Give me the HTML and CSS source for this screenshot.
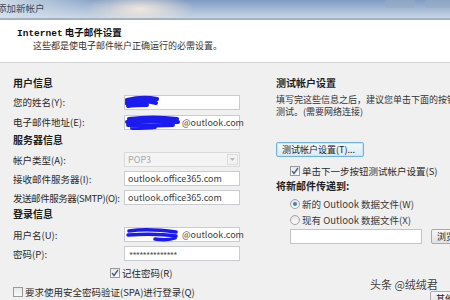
FILE: index.html
```html
<!DOCTYPE html>
<html lang="zh-CN">
<head>
<meta charset="UTF-8">
<title>添加新帐户</title>
<link rel="stylesheet" href="styles.css">
</head>
<body>
<div class="window">
  <div class="titlebar">
    <span class="titleText">添加新帐户</span>
    <div class="tbBtns">
      <div class="tbBtn"></div>
      <div class="tbBtn wide"></div>
    </div>
  </div>

  <div class="header">
    <div class="hTitle"><span class="mono">Internet</span> 电子邮件设置</div>
    <div class="hSub">这些都是使电子邮件帐户正确运行的必需设置。</div>
  </div>

  <div class="content">
    <div class="left">
      <div class="group">用户信息</div>
      <div class="row">
        <label>您的姓名(Y):</label>
        <div class="field">
          <svg class="scribble" width="40" height="16" viewBox="0 0 40 16"><path d="M2 5 C10 3 22 2 32 4 M1 8 C12 6 24 6 31 8 M3 11 C10 10 18 10 22 10" stroke="#1b1bf0" stroke-width="4" fill="none" stroke-linecap="round"/></svg>
        </div>
      </div>
      <div class="row">
        <label>电子邮件地址(E):</label>
        <div class="field">
          <svg class="scribble" width="56" height="16" viewBox="0 0 56 16"><path d="M4 4 C20 2 36 2 52 4 M2 7 C18 6 34 6 53 7 M3 10 C16 10 30 11 48 10 M7 13 C14 13 22 13 30 12" stroke="#1b1bf0" stroke-width="4" fill="none" stroke-linecap="round"/></svg>
          <span class="val mail">@outlook.com</span>
        </div>
      </div>
      <div class="group g2">服务器信息</div>
      <div class="row">
        <label>帐户类型(A):</label>
        <div class="field select">
          <span class="val">POP3</span>
          <span class="arrow"><svg width="5" height="3" viewBox="0 0 5 3"><path d="M0 0 L5 0 L2.5 3 Z" fill="#b8b8b8"/></svg></span>
        </div>
      </div>
      <div class="row">
        <label>接收邮件服务器(I):</label>
        <div class="field"><span class="val">outlook.office365.com</span></div>
      </div>
      <div class="row">
        <label class="tight">发送邮件服务器(SMTP)(O):</label>
        <div class="field"><span class="val">outlook.office365.com</span></div>
      </div>
      <div class="group g3">登录信息</div>
      <div class="row">
        <label>用户名(U):</label>
        <div class="field">
          <svg class="scribble" width="56" height="16" viewBox="0 0 56 16"><path d="M4 4 C18 2 36 3 51 5 M3 8 C20 7 36 7 51 9 M30 12 C38 13 45 13 50 11" stroke="#1b1bf0" stroke-width="3.5" fill="none" stroke-linecap="round"/></svg>
          <span class="val mail">@outlook.com</span>
        </div>
      </div>
      <div class="row">
        <label>密码(P):</label>
        <div class="field"><span class="val pwd">**************</span></div>
      </div>
      <div class="row check indent">
        <span class="box checked"><svg width="8" height="8" viewBox="0 0 8 8"><path d="M1 4 L3 6.5 L7 1" stroke="#4b5f95" stroke-width="1.4" fill="none"/></svg></span>
        <span>记住密码(R)</span>
      </div>
      <div class="row check">
        <span class="box"></span>
        <span>要求使用安全密码验证(SPA)进行登录(Q)</span>
      </div>
    </div>

    <div class="right">
      <div class="group">测试帐户设置</div>
      <div class="desc">填写完这些信息之后，建议您单击下面的按钮进行帐户<br>测试。(需要网络连接)</div>
      <div class="btn focus">测试帐户设置(T)...</div>
      <div class="row check sub">
        <span class="box checked"><svg width="8" height="8" viewBox="0 0 8 8"><path d="M1 4 L3 6.5 L7 1" stroke="#4b5f95" stroke-width="1.4" fill="none"/></svg></span>
        <span>单击下一步按钮测试帐户设置(S)</span>
      </div>
      <div class="group g4">将新邮件传递到:</div>
      <div class="row radio sub first">
        <span class="dot on"></span>
        <span>新的 Outlook 数据文件(W)</span>
      </div>
      <div class="row radio sub">
        <span class="dot"></span>
        <span>现有 Outlook 数据文件(X)</span>
      </div>
      <div class="pathRow">
        <div class="field path"></div>
        <div class="btn browse">浏览(S)</div>
      </div>
      <div class="moreRow">
        <div class="btn">其他设置(M)...</div>
      </div>
    </div>
  </div>

  <div class="watermark">头条 @绒绒君</div>
</div>
</body>
</html>
```

FILE: styles.css
```css
body {
  margin: 0;
  width: 450px;
  height: 300px;
  overflow: hidden;
  background: #f0f0f0;
  font-family: "Noto Sans CJK SC", "Noto Sans", sans-serif;
  color: #2a2a2a;
}

.window {
  position: relative;
  width: 450px;
  height: 300px;
  overflow: hidden;
}

.titlebar {
  height: 18px;
  display: flex;
  justify-content: space-between;
  border-bottom: 2px solid #a4b1bf;
  background:
    radial-gradient(ellipse 55px 16px at 140px 9px, rgba(255, 238, 222, 0.85), rgba(255, 238, 222, 0)),
    linear-gradient(to right, rgba(214, 224, 235, 0.9), rgba(214, 224, 235, 0) 110px),
    linear-gradient(#7f9cc2, #c8d6e5);
}

.titleText {
  margin-left: -3px;
  font-size: 9.5px;
  line-height: 16px;
  color: #3c4a5a;
}

.tbBtns {
  display: flex;
  gap: 10px;
  margin-right: -6px;
}

.tbBtn {
  width: 30px;
  height: 8px;
  border-radius: 0 0 3px 3px;
  background: rgba(150, 170, 196, 0.6);
}

.tbBtn.wide {
  width: 31px;
}

.header {
  height: 43px;
  background: #ffffff;
  border-bottom: 1px solid #d4d4d4;
  padding-left: 17px;
  padding-top: 6px;
  box-sizing: border-box;
}

.hTitle {
  font-size: 9.5px;
  font-weight: bold;
  line-height: 12px;
  color: #111;
}

.mono {
  font-family: "Liberation Mono", monospace;
}

.hSub {
  padding-left: 16px;
  font-size: 9px;
  line-height: 12px;
  color: #333;
}

.content {
  display: flex;
  padding-top: 10px;
}

.left {
  flex: none;
  width: 227px;
  padding-left: 13px;
  display: flex;
  flex-direction: column;
}

.group {
  height: 19px;
  font-size: 10px;
  font-weight: bold;
  line-height: 19px;
  color: #1e1e1e;
}

.group.g2 {
  height: 18px;
  line-height: 16px;
}

.group.g3 {
  height: 18px;
  line-height: 14px;
}

.row {
  height: 19px;
  display: flex;
  align-items: center;
  font-size: 9.5px;
}

.left .row:nth-child(2),
.left .row:nth-child(3) {
  height: 20px;
}

.row label {
  width: 111px;
  flex: none;
  white-space: nowrap;
}

.row label.tight {
  letter-spacing: -0.45px;
}

.field {
  position: relative;
  width: 116px;
  height: 15px;
  box-sizing: border-box;
  border: 1px solid #c9cbd0;
  background: #fff;
  display: flex;
  align-items: center;
  padding-left: 3px;
}

.val {
  font-size: 9px;
  color: #404040;
  white-space: nowrap;
}

.val.mail {
  margin-left: 54px;
}

.val.pwd {
  padding-left: 1px;
  letter-spacing: -0.8px;
  color: #555;
  padding-top: 3px;
}

.scribble {
  position: absolute;
  left: 0;
  top: -1px;
}

.field.select {
  background: #f4f4f4;
  border-color: #dadada;
}

.select .val {
  color: #a8a8a8;
}

.arrow {
  margin-left: auto;
  width: 11px;
  height: 11px;
  margin-right: 1px;
  border: 1px solid #dcdcdc;
  box-sizing: border-box;
  background: #f2f2f2;
  display: flex;
  align-items: center;
  justify-content: center;
}

.check,
.radio {
  gap: 2px;
  white-space: nowrap;
}

.check.indent {
  padding-left: 97px;
}

.box {
  width: 10px;
  height: 10px;
  box-sizing: border-box;
  border: 1px solid #9a9a9a;
  background: linear-gradient(#e8e8e8, #fafafa);
  display: flex;
  align-items: center;
  justify-content: center;
  flex: none;
}

.right {
  flex: none;
  width: 210px;
  margin-left: 36px;
  display: flex;
  flex-direction: column;
}

.desc {
  margin-top: 2px;
  font-size: 9px;
  line-height: 11.5px;
  color: #333;
  white-space: nowrap;
}

.btn {
  height: 15px;
  box-sizing: border-box;
  border: 1px solid #a9a9a9;
  border-radius: 2px;
  background: linear-gradient(#f6f6f6, #e2e2e2);
  font-size: 9px;
  line-height: 13px;
  padding: 0 5px;
  white-space: nowrap;
  color: #222;
}

.btn.focus {
  align-self: flex-start;
  width: 88px;
  margin-top: 25px;
  border-color: #6fb3dc;
  box-shadow: inset 0 0 0 1px #c6e6f7;
  background: linear-gradient(#f2f8fc, #dbebf6);
}

.sub {
  padding-left: 14px;
  height: 16px;
}

.right .check {
  margin-top: 6px;
}

.group.g4 {
  height: 14px;
  line-height: 14px;
}

.radio.first {
  margin-top: 3px;
}

.dot {
  width: 10px;
  height: 10px;
  box-sizing: border-box;
  border-radius: 50%;
  border: 1px solid #a2a2a2;
  background: linear-gradient(#e4e4e4, #fbfbfb);
  flex: none;
  display: flex;
  align-items: center;
  justify-content: center;
}

.dot.on::after {
  content: "";
  width: 4px;
  height: 4px;
  border-radius: 50%;
  background: #3f7fc4;
}

.radio span:last-child {
  color: #3a3a3a;
}

.pathRow {
  margin-top: 1px;
  padding-left: 14px;
  display: flex;
  gap: 9px;
}

.field.path {
  width: 147px;
  border-color: #c4c4c4;
}

.btn.browse {
  width: 60px;
}

.moreRow {
  margin-top: 47px;
  padding-left: 154px;
  display: flex;
}

.watermark {
  position: absolute;
  left: 370px;
  top: 276px;
  font-size: 11px;
  line-height: 16px;
  color: #3b3b3b;
  text-shadow: 0 0 2px #fff, 0 0 1px #fff;
}
```
